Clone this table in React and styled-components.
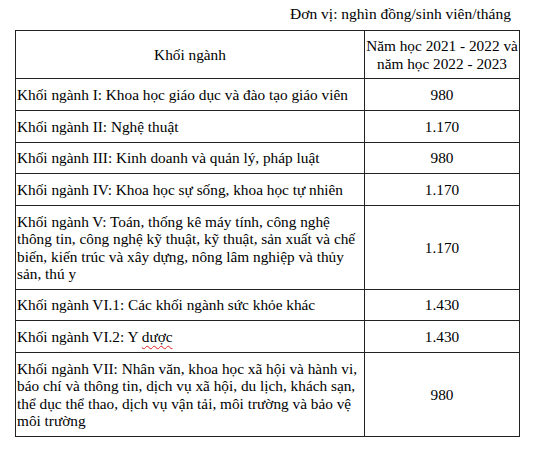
import React from "react";
import styled, { createGlobalStyle } from "styled-components";

const GlobalStyle = createGlobalStyle`
  html, body {
    margin: 0;
    padding: 0;
    background: #fff;
  }
  body {
    font-family: "Liberation Serif", "Times New Roman", serif;
    color: #000;
  }
`;

const Page = styled.div`
  width: 535px;
  padding: 5px 0 0 15px;
  box-sizing: border-box;
`;

const Unit = styled.div`
  width: 504px;
  height: 18px;
  text-align: right;
  padding-right: 8px;
  box-sizing: border-box;
  font-size: 15.5px;
  line-height: 18px;
  margin-bottom: 7px;
`;

const Grid = styled.div`
  display: grid;
  grid-template-columns: 349px 155px;
  width: 505px;
  border-top: 1px solid #222;
  border-left: 1px solid #222;
  box-sizing: border-box;
  font-size: 15.3px;
  line-height: 17.5px;
`;

const Cell = styled.div`
  height: ${(p) => p.$h}px;
  box-sizing: border-box;
  border-right: 1px solid #222;
  border-bottom: 1px solid #222;
  padding: 0 1px;
  display: flex;
  flex-direction: column;
  justify-content: center;
  align-items: ${(p) => (p.$center ? "center" : "flex-start")};
  text-align: ${(p) => (p.$center ? "center" : "left")};
`;

const Line = styled.div`
  height: 17.5px;
  white-space: nowrap;
`;

const Typo = styled.span`
  text-decoration: underline wavy #e02020;
  text-decoration-thickness: 1px;
  text-underline-offset: 3px;
`;

const rows = [
  { h: 32, name: ["Khối ngành I: Khoa học giáo dục và đào tạo giáo viên"], fee: "980" },
  { h: 32, name: ["Khối ngành II: Nghệ thuật"], fee: "1.170" },
  { h: 31, name: ["Khối ngành III: Kinh doanh và quản lý, pháp luật"], fee: "980" },
  { h: 32, name: ["Khối ngành IV: Khoa học sự sống, khoa học tự nhiên"], fee: "1.170" },
  {
    h: 84,
    name: [
      "Khối ngành V: Toán, thống kê máy tính, công nghệ",
      "thông tin, công nghệ kỹ thuật, kỹ thuật, sản xuất và chế",
      "biến, kiến trúc và xây dựng, nông lâm nghiệp và thủy",
      "sản, thú y",
    ],
    fee: "1.170",
  },
  { h: 31, name: ["Khối ngành VI.1: Các khối ngành sức khỏe khác"], fee: "1.430" },
  { h: 32, name: [<>Khối ngành VI.2: Y <Typo>dược</Typo></>], fee: "1.430" },
  {
    h: 84,
    name: [
      "Khối ngành VII: Nhân văn, khoa học xã hội và hành vi,",
      "báo chí và thông tin, dịch vụ xã hội, du lịch, khách sạn,",
      "thể dục thể thao, dịch vụ vận tải, môi trường và bảo vệ",
      "môi trường",
    ],
    fee: "980",
  },
];

export default function App() {
  return (
    <Page>
      <GlobalStyle />
      <Unit>Đơn vị: nghìn đồng/sinh viên/tháng</Unit>
      <Grid>
        <Cell $h={48} $center>
          <Line>Khối ngành</Line>
        </Cell>
        <Cell $h={48} $center>
          <Line>Năm học 2021 - 2022 và</Line>
          <Line>năm học 2022 - 2023</Line>
        </Cell>
        {rows.map((row, i) => (
          <React.Fragment key={i}>
            <Cell $h={row.h}>
              {row.name.map((line, j) => (
                <Line key={j}>{line}</Line>
              ))}
            </Cell>
            <Cell $h={row.h} $center>
              <Line>{row.fee}</Line>
            </Cell>
          </React.Fragment>
        ))}
      </Grid>
    </Page>
  );
}
